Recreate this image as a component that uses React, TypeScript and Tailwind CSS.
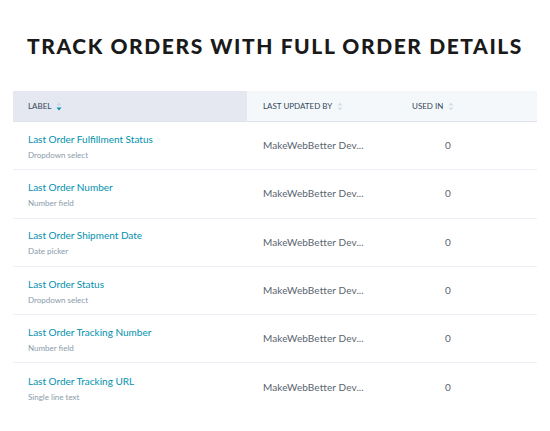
import React from "react";

const rows = [
  { label: "Last Order Fulfillment Status", type: "Dropdown select" },
  { label: "Last Order Number", type: "Number field" },
  { label: "Last Order Shipment Date", type: "Date picker" },
  { label: "Last Order Status", type: "Dropdown select" },
  { label: "Last Order Tracking Number", type: "Number field" },
  { label: "Last Order Tracking URL", type: "Single line text" },
];

function SortIcon({ active }: { active?: boolean }) {
  return (
    <svg width="6" height="9" viewBox="0 0 6 9" className="ml-[5px]">
      <path d="M3 0.5 L5.5 3.5 H0.5 Z" fill={active ? "#c5d7e3" : "#d5dde6"} />
      <path d="M3 8.5 L5.5 5.5 H0.5 Z" fill={active ? "#0091ae" : "#d5dde6"} />
    </svg>
  );
}

export default function App() {
  return (
    <div className="h-[431px] w-[550px] bg-white font-['Lato','Liberation_Sans',sans-serif]">
      <h1 className="pt-[33px] text-center text-[21px] font-black uppercase leading-[26px] tracking-[0.075em] text-[#1a1a1a]">
        Track orders with full order details
      </h1>

      <div className="ml-[13px] mt-[32px] w-[524px]">
        <div className="flex h-[31px] items-center border-b border-[#dfe3eb] text-[8px] uppercase text-[#33475b]">
          <div className="flex h-full w-[234px] items-center bg-[#e5e8f0] pl-[15px]">
            Label
            <SortIcon active />
          </div>
          <div className="flex h-full flex-1 items-center bg-[#f5f8fa]">
            <div className="flex w-[165px] items-center pl-[16px]">
              Last updated by
              <SortIcon />
            </div>
            <div className="flex items-center">
              Used in
              <SortIcon />
            </div>
          </div>
        </div>

        {rows.map((r, i) => (
          <div
            key={r.label}
            className={`flex h-[48.3px] items-center ${i < rows.length - 1 ? "border-b border-[#eaf0f6]" : ""}`}
          >
            <div className="w-[234px] pl-[15px]">
              <div className="text-[10px] leading-[14px] text-[#0091ae]">{r.label}</div>
              <div className="mt-[4px] text-[8px] leading-[10px] text-[#8a9bab]">{r.type}</div>
            </div>
            <div className="w-[165px] pl-[16px] text-[10px] tracking-[0.01em] text-[#59636e]">
              MakeWebBetter Dev...
            </div>
            <div className="w-[72px] text-center text-[10px] text-[#59636e]">0</div>
          </div>
        ))}
      </div>
    </div>
  );
}
